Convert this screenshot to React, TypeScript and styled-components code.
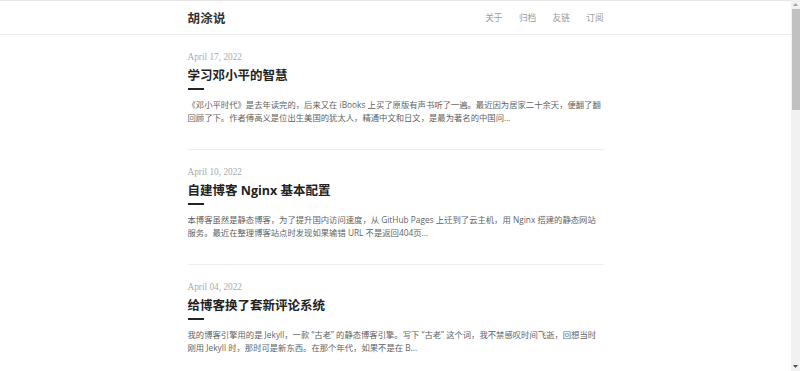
import { createGlobalStyle, styled } from "styled-components";

const GlobalStyle = createGlobalStyle`
  html, body {
    margin: 0;
    height: 100%;
    overflow: hidden;
  }
  body {
    background: #fff;
    font-family: "Open Sans", "Noto Sans CJK SC", sans-serif;
    color: #333;
  }
  #root {
    height: 100%;
  }
`;

const Page = styled.div`
  height: 100vh;
  overflow-y: auto;
  padding-right: 9px;
  box-sizing: border-box;
`;

// the browser's scrollbar, drawn over the right edge
const ScrollTrack = styled.div`
  position: fixed;
  top: 0;
  right: 0;
  bottom: 0;
  width: 9px;
  background: #f1f1f1;
  display: flex;
  flex-direction: column;
  align-items: center;
`;

const ScrollArrow = styled.div`
  height: 9px;
  width: 9px;
  display: flex;
  align-items: center;
  justify-content: center;
`;

const ScrollThumb = styled.div`
  width: 8px;
  height: 101px;
  background: #c1c1c1;
`;

const Spacer = styled.div`
  flex: 1;
`;

const Header = styled.header`
  border-top: 1px solid #e6e6e6;
  border-bottom: 1px solid #eee;
`;

const Container = styled.div`
  width: 416px;
  margin: 0 auto;
`;

const HeaderInner = styled(Container)`
  height: 33px;
  display: flex;
  align-items: center;
  justify-content: space-between;
`;

const Logo = styled.a`
  font-size: 12.5px;
  font-weight: 700;
  color: #333;
  text-decoration: none;
  letter-spacing: 0.2px;
`;

const Nav = styled.nav`
  display: flex;
  gap: 16.5px;
`;

const NavLink = styled.a`
  font-size: 8.6px;
  color: #9a9a9a;
  text-decoration: none;
`;

const Post = styled.article`
  padding: 16px 0 25px;
  border-bottom: 1px solid #eee;
`;

const PostDate = styled.div`
  font-family: "Liberation Serif", "DejaVu Serif", serif;
  font-size: 9.3px;
  line-height: 12px;
  color: #aaa;
`;

const PostTitle = styled.h2`
  margin: 5px 0 0;
  font-size: 12.5px;
  line-height: 16px;
  font-weight: 700;
  color: #222;
`;

const TitleBar = styled.div`
  width: 16px;
  height: 2px;
  margin-top: 4px;
  background: #222;
`;

const Excerpt = styled.p`
  margin: 8px 0 0;
  font-size: 8.33px;
  line-height: 13px;
  color: #5f5f5f;
`;

const Pager = styled.div`
  display: flex;
  justify-content: space-between;
  padding: 24px 0;
  font-size: 9px;
  color: #999;
`;

const Footer = styled.footer`
  border-top: 1px solid #eee;
  padding: 20px 0;
  text-align: center;
  font-size: 8px;
  color: #aaa;
`;

const posts = [
  {
    date: "April 17, 2022",
    title: "学习邓小平的智慧",
    excerpt:
      "《邓小平时代》是去年读完的，后来又在 iBooks 上买了原版有声书听了一遍。最近因为居家二十余天，便翻了翻回顾了下。作者傅高义是位出生美国的犹太人，精通中文和日文，是最为著名的中国问...",
  },
  {
    date: "April 10, 2022",
    title: "自建博客 Nginx 基本配置",
    excerpt:
      "本博客虽然是静态博客，为了提升国内访问速度，从 GitHub Pages 上迁到了云主机，用 Nginx 搭建的静态网站服务。最近在整理博客站点时发现如果输错 URL 不是返回404页...",
  },
  {
    date: "April 04, 2022",
    title: "给博客换了套新评论系统",
    excerpt:
      "我的博客引擎用的是 Jekyll，一款 “古老” 的静态博客引擎。写下 “古老” 这个词，我不禁感叹时间飞逝，回想当时刚用 Jekyll 时，那时可是新东西。在那个年代，如果不是在 B...",
  },
  {
    date: "March 27, 2022",
    title: "居家办公的一些体会",
    excerpt:
      "因为疫情的原因，已经在家办公好几周了。从一开始的不适应，到慢慢找到节奏，这中间有不少体会，记录下来...",
  },
  {
    date: "March 13, 2022",
    title: "重新开始写博客",
    excerpt:
      "博客荒废了好几年，最近又想重新写起来。写作是整理思路最好的方式，也是和过去的自己对话...",
  },
  {
    date: "February 20, 2022",
    title: "读书笔记：原则",
    excerpt:
      "瑞·达利欧的《原则》是一本厚书，断断续续读了很久。书里很多观点值得反复琢磨，这里摘录一些...",
  },
  {
    date: "January 30, 2022",
    title: "2021 年度总结",
    excerpt:
      "又到了一年一度写总结的时候。回顾这一年，工作、生活都有不少变化，简单记录一下...",
  },
  {
    date: "January 09, 2022",
    title: "用 Markdown 写作",
    excerpt:
      "Markdown 是一种轻量级标记语言，用它写作可以专注于内容本身，而不是排版。这篇聊聊我的写作工具...",
  },
];

function App() {
  return (
    <Page>
      <GlobalStyle />
      <Header>
        <HeaderInner>
          <Logo href="#">胡涂说</Logo>
          <Nav>
            <NavLink href="#">关于</NavLink>
            <NavLink href="#">归档</NavLink>
            <NavLink href="#">友链</NavLink>
            <NavLink href="#">订阅</NavLink>
          </Nav>
        </HeaderInner>
      </Header>
      <Container as="main">
        {posts.map((post) => (
          <Post key={post.title}>
            <PostDate>{post.date}</PostDate>
            <PostTitle>{post.title}</PostTitle>
            <TitleBar />
            <Excerpt>{post.excerpt}</Excerpt>
          </Post>
        ))}
        <Pager>
          <span>← 较新</span>
          <span>较旧 →</span>
        </Pager>
      </Container>
      <Footer>© 2022 胡涂说</Footer>

      <ScrollTrack>
        <ScrollArrow>
          <svg width="5" height="3" viewBox="0 0 5 3">
            <path d="M2.5 0 L5 3 L0 3 Z" fill="#a3a3a3" />
          </svg>
        </ScrollArrow>
        <ScrollThumb />
        <Spacer />
        <ScrollArrow>
          <svg width="5" height="3" viewBox="0 0 5 3">
            <path d="M0 0 L5 0 L2.5 3 Z" fill="#505050" />
          </svg>
        </ScrollArrow>
      </ScrollTrack>
    </Page>
  );
}

export default App;
